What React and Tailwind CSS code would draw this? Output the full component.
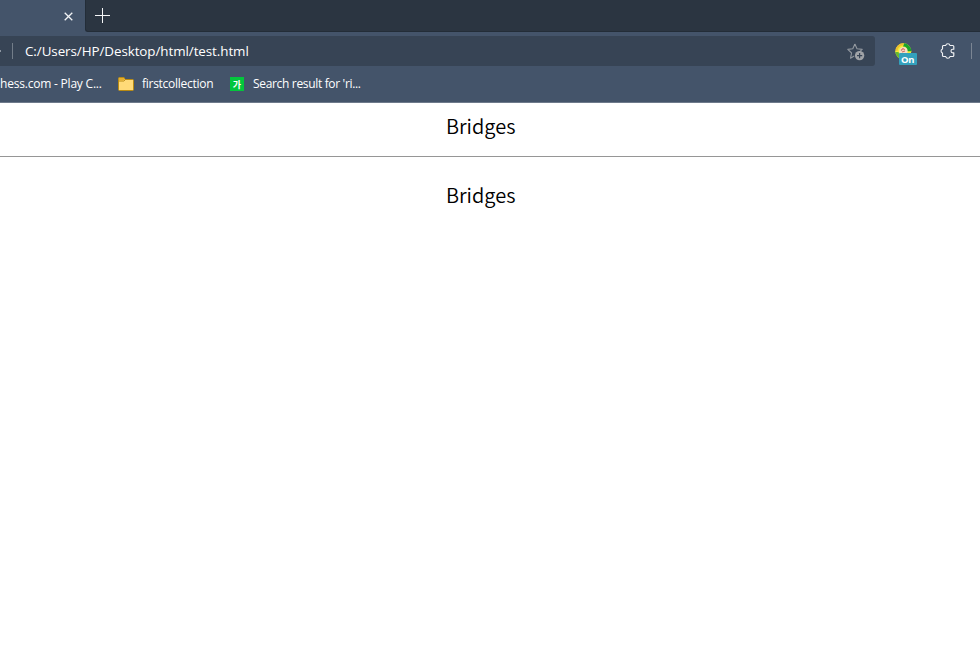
function TabStrip() {
  return (
    <div className="flex h-8 bg-[#44546a]">
      <div className="flex w-[85px] shrink-0 items-center bg-[#44546a] pl-[64px]">
        <svg width="9" height="9" viewBox="0 0 9 9" className="mt-px" fill="none" stroke="#f1f3f5" strokeWidth="1.3">
          <path d="M.7.7l7.6 7.6M8.3.7L.7 8.3" />
        </svg>
      </div>
      <div className="flex flex-1 rounded-bl-[3px] border-b border-l border-[#232d38] bg-[#2b3541] pt-2 pl-[9px]">
        <svg width="15" height="15" viewBox="0 0 15 15" fill="none" stroke="#f5f6f7" strokeWidth="1">
          <path d="M7.5 0v15M0 7.5h15" />
        </svg>
      </div>
    </div>
  );
}

function StarAdd() {
  return (
    <svg width="18" height="18" viewBox="0 0 18 18" fill="none">
      <path
        d="M7.9 1L10 5.8l5.2.6-3.8 3.5M7.9 1L5.8 5.8.8 6.4l3.8 3.6-1.1 5.2 3.7-2.1"
        stroke="#92989f"
        strokeWidth="1.1"
        strokeLinejoin="round"
      />
      <circle cx="12.6" cy="12.6" r="4.7" fill="#a0a3a7" />
      <path d="M12.6 10v5.2M10 12.6h5.2" stroke="#374455" strokeWidth="1.2" />
    </svg>
  );
}

function Extension() {
  return (
    <div className="relative ml-5 h-[26px] w-[23px]">
      <svg width="17" height="17" viewBox="0 0 17 17" className="block">
        <circle cx="8.3" cy="8.3" r="8" fill="#f4ed35" />
        <path d="M9 .3a8 8 0 0 1 7.3 8h-4A4 4 0 0 0 8 3.5z" fill="#18a52b" />
        <path d="M.4 7.5A8 8 0 0 1 8.5.3v2A6 6 0 0 0 2.5 8z" fill="#edc02f" />
        <path d="M.4 9a8 8 0 0 0 5 6.6L3.5 9z" fill="#65b832" />
        <circle cx="8.4" cy="8.2" r="4.2" fill="#f4dfc7" />
        <path d="M6 7.5l2-2 1.8 1.4M7 9l3-1" stroke="#d77464" strokeWidth="1.2" fill="none" />
      </svg>
      <span className="absolute top-[10px] left-1 flex h-3 w-[18px] items-center justify-center rounded-[1px] bg-[#33a1bd] pt-0.5 pr-px font-['Noto_Sans',sans-serif] text-[9.5px] leading-none font-bold tracking-[-0.4px] text-white">
        On
      </span>
    </div>
  );
}

function Puzzle() {
  return (
    <svg width="16" height="16" viewBox="0 0 16 16" fill="none" stroke="#f2f3f5" strokeWidth="1.15" strokeLinejoin="round">
      <path d="M3 2.5h2.7a2.2 2.2 0 0 1 4.3 0h2.8a1 1 0 0 1 1 1v2.7h-1a1.8 1.8 0 0 0 0 3.6h1v2.7a1 1 0 0 1-1 1H10a2.2 2.2 0 0 1-4.3 0H3.5a1 1 0 0 1-1-1V10a2.1 2.1 0 0 1 0-4V3.5a1 1 0 0 1 1-1z" />
    </svg>
  );
}

function Toolbar() {
  return (
    <div className="flex h-[38px] bg-[#44546a] pt-1">
      <div className="flex h-[30px] w-[875px] shrink-0 items-center rounded-r-[3px] bg-[#374455]">
        <span className="h-0.5 w-px bg-[#8d96a1]" />
        <span className="ml-[11px] h-4 w-px bg-[#737d89]" />
        <span className="ml-3 flex-1 font-['Open_Sans',sans-serif] text-[13.4px] leading-5 tracking-[-0.07px] whitespace-nowrap text-white">
          C:/Users/HP/Desktop/html/test.html
        </span>
        <span className="mt-[2px] mr-[10px]">
          <StarAdd />
        </span>
      </div>
      <div className="flex flex-1 pt-[7px]">
        <Extension />
        <span className="ml-[22px]">
          <Puzzle />
        </span>
        <span className="ml-[15px] h-4 w-px shrink-0 bg-[#7b8593]" />
      </div>
    </div>
  );
}

function Bookmarks() {
  return (
    <div className="flex h-[33px] items-center border-b border-[#6e7a8b] bg-[#44546a] pb-1 font-['Open_Sans',sans-serif] text-[12px] leading-4 whitespace-nowrap text-white">
      <span className="w-[118px] shrink-0 tracking-[-0.21px]">hess.com - Play C...</span>
      <svg width="16" height="14" viewBox="0 0 16 14" className="shrink-0">
        <path d="M.5 2.5v10a1 1 0 0 0 1 1h13a1 1 0 0 0 1-1v-9a1 1 0 0 0-1-1H7L6 .5H1.5a1 1 0 0 0-1 1z" fill="#ffda78" stroke="#b88a13" />
        <path d="M1 4h4.8L8 2" stroke="#b88a13" fill="none" />
        <path d="M1 1h4.8l.8 1-1.2 1.4H1z" fill="#e5ad2c" />
      </svg>
      <span className="ml-2 w-[88px] shrink-0 tracking-[-0.27px]">firstcollection</span>
      <span className="flex h-[14px] w-[14px] shrink-0 items-center justify-center bg-[#03c63c] font-['Noto_Sans_CJK_KR',sans-serif] text-[9px] leading-none font-bold text-white">
        가
      </span>
      <span className="ml-[9px] tracking-[-0.33px]">Search result for 'ri...</span>
    </div>
  );
}

export default function App() {
  return (
    <div className="flex h-[653px] w-[980px] flex-col overflow-hidden bg-white">
      <TabStrip />
      <Toolbar />
      <Bookmarks />
      <main className="flex-1 font-['Noto_Sans_CJK_KR',sans-serif] text-[20px] leading-8 font-[350] text-black">
        <div className="flex h-[53px] pt-[7px] pl-[446px]">Bridges</div>
        <div className="h-px bg-[#969696]" />
        <div className="flex pt-[22px] pl-[446px]">Bridges</div>
      </main>
    </div>
  );
}
